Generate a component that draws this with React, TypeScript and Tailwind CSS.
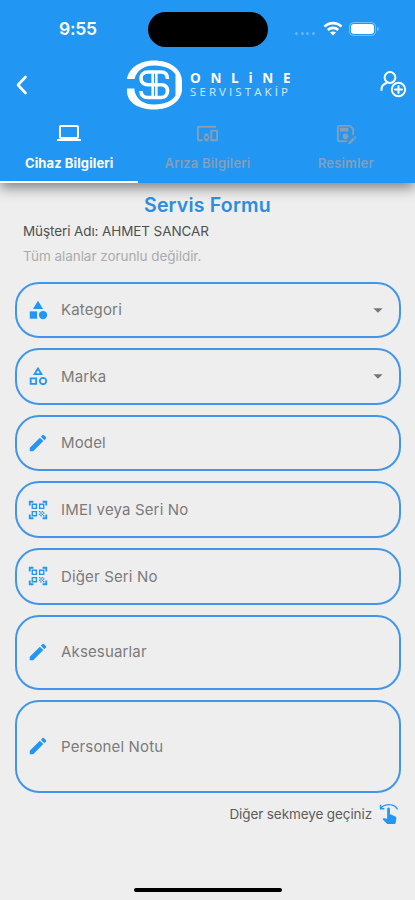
import type { ReactNode } from "react";
import {
    MdArrowDropDown,
    MdCategory,
    MdEdit,
    MdLaptop,
    MdOutlineCategory,
    MdOutlineDevicesOther,
    MdOutlineSaveAs,
    MdQrCodeScanner,
    MdSwipeLeft,
} from "react-icons/md";

type Field = {
    label: string;
    icon: ReactNode;
    height: string;
    select?: boolean;
};

const fields: Field[] = [
    { label: "Kategori", icon: <MdCategory size={22} />, height: "h-[56.6px]", select: true },
    { label: "Marka", icon: <MdOutlineCategory size={22} />, height: "h-[56.6px]", select: true },
    { label: "Model", icon: <MdEdit size={22} />, height: "h-[56.6px]" },
    { label: "IMEI veya Seri No", icon: <MdQrCodeScanner size={22} />, height: "h-[56.6px]" },
    { label: "Diğer Seri No", icon: <MdQrCodeScanner size={22} />, height: "h-[56.6px]" },
    { label: "Aksesuarlar", icon: <MdEdit size={22} />, height: "h-[75px]" },
    { label: "Personel Notu", icon: <MdEdit size={22} />, height: "h-[93.5px]" },
];

const tabs = [
    { label: "Cihaz Bilgileri", icon: <MdLaptop size={24} /> },
    { label: "Arıza Bilgileri", icon: <MdOutlineDevicesOther size={23} /> },
    { label: "Resimler", icon: <MdOutlineSaveAs size={23} /> },
];

function StatusBar() {
    return (
        <div className="flex h-[58px] items-center">
            <div className="w-[148px] pl-[59px] text-[17.5px] font-semibold tracking-[-0.3px]">9:55</div>
            <div className="h-[35px] w-[120px] rounded-full bg-black" />
            <div className="ml-[27px] mt-[9px] flex w-[21px] gap-[2.5px]">
                {[0, 1, 2, 3].map((dot) => (
                    <span key={dot} className="size-[3px] rounded-full bg-white/30" />
                ))}
            </div>
            <svg className="ml-[7px] mt-[-2px]" width="20" height="15" viewBox="0 0 20 15" fill="none" stroke="white" strokeWidth="2.6">
                <path d="M1.5 5.6C6.2 0.9 13.8 0.9 18.5 5.6" />
                <path d="M4.8 9C7.7 6.2 12.3 6.2 15.2 9" />
                <path d="M10 14.5L7 11.5C8.6 10 11.4 10 13 11.5Z" fill="white" stroke="none" />
            </svg>
            <div className="ml-[6px] mt-[-1px] flex h-[14px] w-[27px] items-center rounded-[4.5px] border border-white/40 p-px">
                <div className="h-full w-full rounded-[3px] bg-white" />
            </div>
            <div className="ml-px h-[4px] w-[1.5px] rounded-r-full bg-white/40" />
        </div>
    );
}

function Logo() {
    return (
        <div className="flex items-center">
            <svg width="57" height="50" viewBox="0 0 57 50" fill="none" stroke="white">
                <path
                    d="M1 19C3 7 15 0.5 28 0.5C44 0.500 56 9 56 21V29C56 41 44 49.500 28 49.500C15 49.500 1 44 1 31V28.500H8.500V31C11 40 18 44.500 28 44.500C39 44.500 46 41 49.500 35.500V14.500C46 9 39 5.500 28 5.500C18 5.500 11 10 8.500 19Z"
                    fill="white"
                    stroke="none"
                />
                <path d="M41.500 19C41.500 14 39 12 35 12H22C17.500 12 15 14.500 15 18.300C15 22 17.500 24.700 22 24.700H35C39.500 24.700 41.500 27 41.500 31C41.500 35 39 37.500 35 37.500H22C17.500 37.500 15 35 15 31" strokeWidth="3.600" />
                <path d="M26.700 12V37.500M30.300 12V37.500" strokeWidth="2.600" />
            </svg>
            <div className="ml-[7px] mt-[-4px] font-['Open_Sans',sans-serif]">
                <div className="text-[13.5px] font-bold leading-[16px] tracking-[9.7px]">ONLiNE</div>
                <div className="text-[11.5px] font-normal leading-[11px] tracking-[3.1px] text-white/80">SERVISTAKİP</div>
            </div>
        </div>
    );
}

function NavBar() {
    return (
        <div className="flex h-[54px] items-center">
            <svg className="ml-[15px]" width="14" height="20" viewBox="0 0 14 20" fill="none" stroke="white" strokeWidth="2.6" strokeLinecap="round" strokeLinejoin="round">
                <path d="M10.500 2L3 10L10.500 18" />
            </svg>
            <div className="ml-[97px] w-[200px]">
                <Logo />
            </div>
            <svg className="ml-[53px] mt-[-2px]" width="28" height="28" viewBox="0 0 28 28" fill="none" stroke="white" strokeWidth="2" strokeLinecap="round">
                <circle cx="11" cy="7.500" r="5.400" />
                <path d="M2.500 20V19.500C2.500 16.500 4.500 14 7.500 13" />
                <circle cx="19.500" cy="19.500" r="6.700" />
                <path d="M19.500 16V23M16 19.500H23" />
            </svg>
        </div>
    );
}

function FormField({ field }: { field: Field }) {
    return (
        <div className={`flex items-center rounded-[24px] border-2 border-[#4196ea] pl-[10px] ${field.height}`}>
            <span className="text-[#2196f3]">{field.icon}</span>
            <span className="ml-[12px] mt-px flex-1 text-[15px] tracking-[0.15px] text-[#7b7b7b]">{field.label}</span>
            {field.select && <MdArrowDropDown size={22} className="mr-[10px] text-[#757575]" />}
        </div>
    );
}

export default function App() {
    return (
        <div className="flex h-[900px] w-[415px] flex-col overflow-hidden bg-[#eeeeee] font-[Inter,sans-serif]">
            <header className="h-[183px] bg-[#2196f3] text-white shadow-[0_5px_12px_rgba(0,0,0,0.45)]">
                <StatusBar />
                <NavBar />
                <div className="flex h-[71px]">
                    {tabs.map((tab, index) => (
                        <button
                            key={tab.label}
                            className={`flex flex-1 flex-col items-center border-b-2 pt-[9px] ${
                                index === 0 ? "border-white font-bold text-white" : "border-transparent font-semibold text-[#879eb4]"
                            }`}
                        >
                            <span className="flex h-[24px] items-center">{tab.icon}</span>
                            <span className={`mt-[9px] text-[13px] leading-[18px] ${index === 0 ? "tracking-[0.1px]" : "tracking-[0.2px]"}`}>{tab.label}</span>
                        </button>
                    ))}
                </div>
            </header>

            <main className="px-[15px]">
                <h1 className="mt-[10px] text-center text-[19.5px] font-semibold leading-[24px] tracking-[0.2px] text-[#2c8de0]">Servis Formu</h1>
                <p className="ml-[8px] mt-[5px] text-[13.5px] leading-[18px] tracking-[-0.1px] text-[#505050]">Müşteri Adı: AHMET SANCAR</p>
                <p className="ml-[8px] mt-[7px] text-[13.5px] leading-[18px] tracking-[-0.05px] text-[#acacac]">Tüm alanlar zorunlu değildir.</p>
                <div className="mt-[16.6px] flex w-[386px] flex-col gap-[10px]">
                    {fields.map((field) => (
                        <FormField key={field.label} field={field} />
                    ))}
                </div>
                <div className="mt-[10px] flex items-center justify-end">
                    <span className="text-[13.5px] tracking-[-0.1px] text-[#5c5c5c]">Diğer sekmeye geçiniz</span>
                    <MdSwipeLeft size={22} className="ml-[6px] text-[#2196f3]" />
                </div>
            </main>

            <div className="mx-auto mb-[8px] mt-auto h-[4px] w-[148px] rounded-full bg-black" />
        </div>
    );
}
